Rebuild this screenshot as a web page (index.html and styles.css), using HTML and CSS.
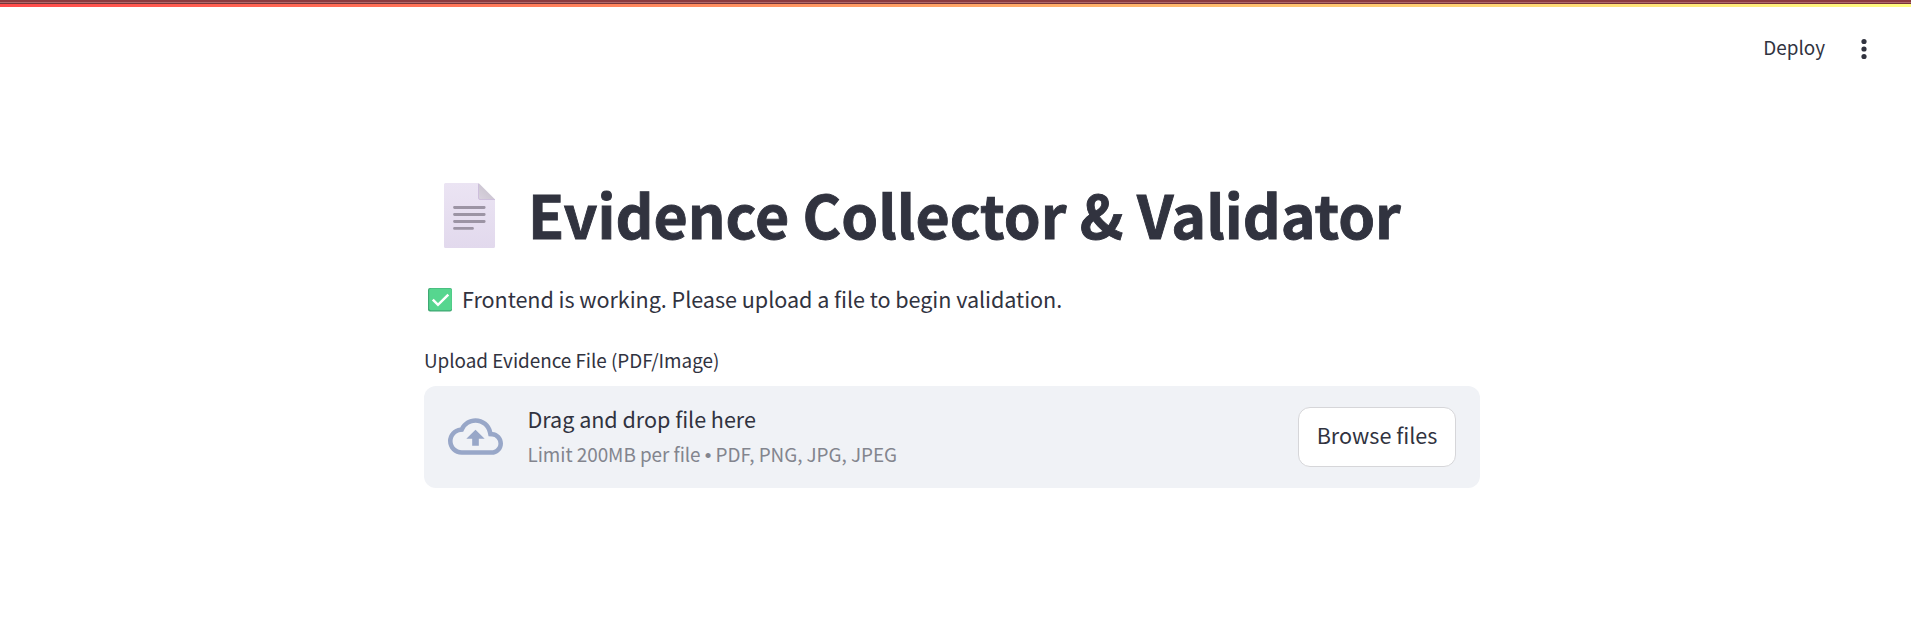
FILE: index.html
```html
<!DOCTYPE html>
<html lang="en">
<head>
<meta charset="utf-8">
<title>Evidence Collector &amp; Validator</title>
<link rel="stylesheet" href="styles.css">
</head>
<body>
<div class="topbar"><div class="edge"></div><div class="edge-light"></div><div class="edge-base"></div><div class="decoration"></div></div>
<header class="toolbar">
  <button class="deploy">Deploy</button>
  <svg class="menu" width="24" height="24" viewBox="0 0 24 24" fill="#31333f"><circle cx="12" cy="4.5" r="2.6"/><circle cx="12" cy="12" r="2.6"/><circle cx="12" cy="19.5" r="2.6"/></svg>
</header>
<main class="container">
  <h1 class="title">
    <svg class="page-icon" width="52" height="66" viewBox="0 0 52 66">
      <defs>
        <linearGradient id="paper" x1="0" y1="0" x2="0" y2="1"><stop offset="0" stop-color="#ebe4f3"/><stop offset="1" stop-color="#e2d9ed"/></linearGradient>
        <linearGradient id="fold" x1="0" y1="1" x2="1" y2="0"><stop offset="0" stop-color="#d9d2de"/><stop offset="1" stop-color="#c3bdc8"/></linearGradient>
      </defs>
      <path d="M1.5 0H34.5L51 16.5V63.5a1.5 1.5 0 0 1-1.5 1.5h-48A1.5 1.5 0 0 1 0 63.500V1.500A1.500 1.500 0 0 1 1.500 0Z" fill="url(#paper)"/>
      <path d="M34.500 0L51 16.500H36a1.500 1.500 0 0 1-1.500-1.500Z" fill="url(#fold)"/>
      <path d="M34.500 1V15a1.500 1.500 0 0 0 1.500 1.500H51" fill="none" stroke="#c9b9d9" stroke-width=".8"/>
      <path d="M10.500 24.500H40.200M10.500 31.500H40.200M10.500 38.500H40.200M10.500 45.400H28.500" stroke="#9c94a4" stroke-width="2.800" stroke-linecap="round"/>
    </svg>
    <span>Evidence Collector &amp; Validator</span>
  </h1>
  <p class="status">
    <svg class="check" width="24" height="24" viewBox="0 0 24 24">
      <rect width="24" height="23.500" rx="2" fill="#3fa873"/>
      <rect x="1.200" y=".5" width="22.600" height="21.800" rx="1.800" fill="#56d68f"/>
      <path d="M4.800 11.700L10 16.800L20.300 6.700" fill="none" stroke="#fff" stroke-width="2.500"/>
    </svg>
    <span>Frontend is working. Please upload a file to begin validation.</span>
  </p>
  <label class="label">Upload Evidence File (PDF/Image)</label>
  <section class="dropzone">
    <svg class="cloud" width="55" height="55" viewBox="0 0 24 24" fill="#98a7c8"><path d="M19.350 10.040A7.490 7.490 0 0 0 12 4C9.110 4 6.600 5.640 5.350 8.040A5.994 5.994 0 0 0 0 14c0 3.310 2.690 6 6 6h13c2.760 0 5-2.240 5-5 0-2.640-2.050-4.780-4.650-4.960zM19 18H6c-2.210 0-4-1.790-4-4 0-2.050 1.530-3.760 3.560-3.970l1.070-.110.500-.950A5.469 5.469 0 0 1 12 6c2.620 0 4.880 1.860 5.390 4.430l.300 1.500 1.530.110A2.980 2.980 0 0 1 22 15c0 1.650-1.350 3-3 3zM8 13h2.550v3h2.900v-3H16l-4-4z"/></svg>
    <div class="instructions"><span class="main-line">Drag and drop file here</span><span class="limit">Limit 200MB per file <span class="bullet">•</span> PDF, PNG, JPG, JPEG</span></div>
    <button class="browse">Browse files</button>
  </section>
</main>
</body>
</html>
```
FILE: styles.css
```css
* { box-sizing: border-box; }
body {
  margin: 0;
  height: 619px;
  overflow: hidden;
  background: #fff;
  color: #31333f;
  font-family: "Noto Sans CJK SC", "Noto Sans", sans-serif;
  font-size: 21.6px;
}
button { font: inherit; color: inherit; cursor: pointer; }
svg { display: block; flex: none; }
.topbar { height: 7px; }
.edge { height: 2px; background: #8b3a3e; }
.edge-light { height: 1px; background: #b1696c; }
.edge-base { height: 1px; background: #773639; }
.decoration { height: 3px; background: linear-gradient(90deg, #ff4b4b, #fffd80); }
.toolbar {
  height: 83px;
  padding: 20px 35px 0 0;
  display: flex;
  justify-content: flex-end;
  align-items: flex-start;
}
.deploy {
  padding: 0;
  margin-right: 27px;
  border: 0;
  background: none;
  font-size: 18.9px;
  line-height: 40px;
}
.menu { margin-top: 10px; }
.container { width: 1056px; margin: 83px 0 0 424px; }
.title {
  display: flex;
  margin: 0;
  padding-left: 20px;
  gap: 32px;
  font-size: 59px;
  font-weight: 700;
  line-height: 82px;
  white-space: nowrap;
  -webkit-text-stroke: 0.9px #31333f;
}
.page-icon { margin-top: 10px; }
.status {
  display: flex;
  gap: 10px;
  margin: 26px 0 0;
  padding-left: 4px;
  line-height: 36px;
  letter-spacing: -0.05px;
}
.check { margin-top: 7px; }
.label { display: block; margin-top: 27px; font-size: 18.9px; line-height: 32px; letter-spacing: -0.03px; }
.dropzone {
  display: flex;
  align-items: center;
  height: 102px;
  margin-top: 10px;
  padding: 0 24px;
  border-radius: 12px;
  background: #f0f2f6;
}
.cloud { margin-top: -1px; }
.instructions { display: flex; flex-direction: column; margin: -1px auto 0 24.5px; letter-spacing: -0.04px; }
.main-line { line-height: 35px; }
.limit { font-size: 18.9px; line-height: 36px; color: #83858e; }
.bullet { font-family: "Liberation Sans", sans-serif; font-size: 18.9px; line-height: 1; }
.browse {
  width: 158px;
  height: 60px;
  padding: 0 0 6px;
  border: 1px solid #d6d6d9;
  border-radius: 12px;
  background: #fff;
}
```
